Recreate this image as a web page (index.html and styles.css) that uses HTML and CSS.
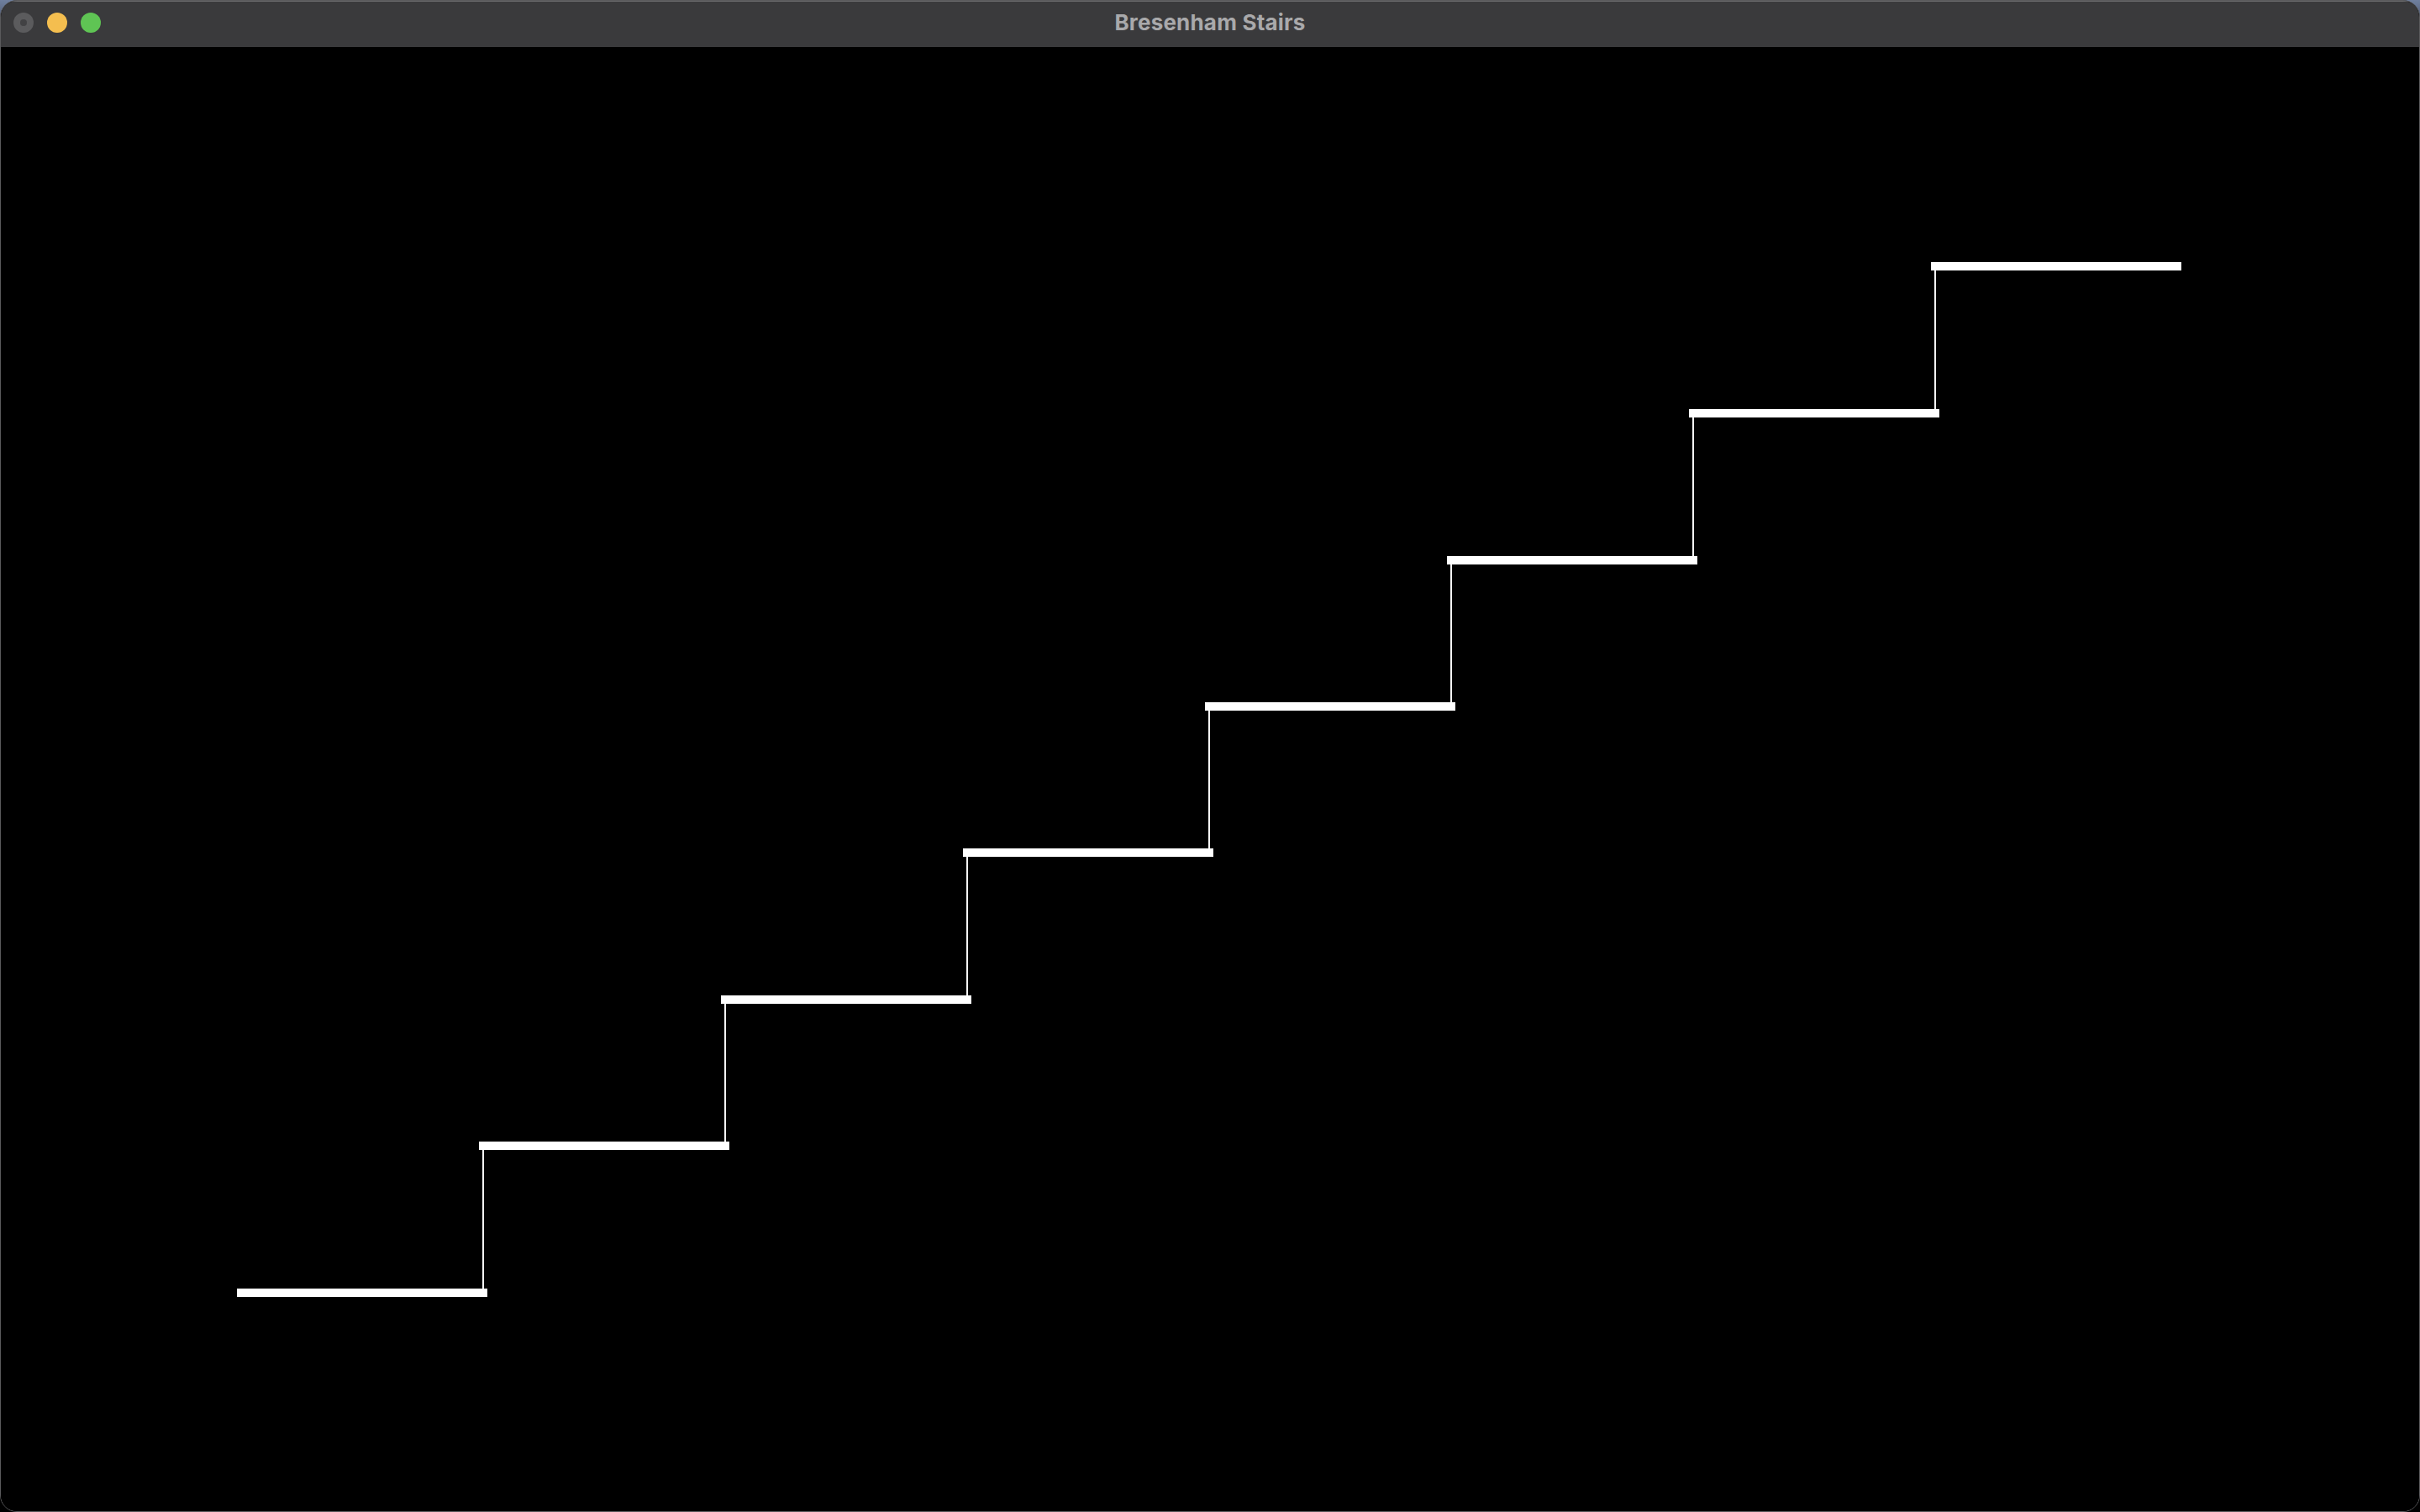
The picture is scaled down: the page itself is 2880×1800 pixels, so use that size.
FILE: index.html
```html
<!DOCTYPE html>
<html>
<head>
<meta charset="utf-8">
<title>Bresenham Stairs</title>
<link rel="stylesheet" href="styles.css">
</head>
<body>
<div class="window">
  <div class="titlebar">
    <div class="lights">
      <span class="light close"><span class="dot"></span></span>
      <span class="light min"></span>
      <span class="light max"></span>
    </div>
    <div class="title">Bresenham Stairs</div>
  </div>
  <div class="content">
    <svg class="canvas" viewBox="1 56 2878 1743" width="2878" height="1743">
      <g fill="#ffffff">
        <rect x="282" y="1534" width="298" height="10"/>
        <rect x="570" y="1359" width="298" height="10"/>
        <rect x="858" y="1185" width="298" height="10"/>
        <rect x="1146" y="1010" width="298" height="10"/>
        <rect x="1434" y="836" width="298" height="10"/>
        <rect x="1722" y="662" width="298" height="10"/>
        <rect x="2010" y="487" width="298" height="10"/>
        <rect x="2298" y="312" width="298" height="10"/>
      </g>
      <g fill="#f4f4f4">
        <rect x="574" y="1369" width="2" height="165"/>
        <rect x="862" y="1195" width="2" height="164"/>
        <rect x="1150" y="1020" width="2" height="165"/>
        <rect x="1438" y="846" width="2" height="164"/>
        <rect x="1726" y="672" width="2" height="164"/>
        <rect x="2014" y="497" width="2" height="165"/>
        <rect x="2302" y="322" width="2" height="165"/>
      </g>
    </svg>
  </div>
</div>
</body>
</html>
```
FILE: styles.css
```css
html, body {
  margin: 0;
  padding: 0;
  width: 2880px;
  height: 1800px;
  overflow: hidden;
  background: linear-gradient(#6f7f9e 0px, #3a4256 40px, #000000 120px);
}

.window {
  box-sizing: border-box;
  width: 2880px;
  height: 1800px;
  border: 1px solid #5a5a5c;
  border-radius: 20px;
  overflow: hidden;
  display: flex;
  flex-direction: column;
  background: #000000;
}

.titlebar {
  height: 55px;
  flex: 0 0 55px;
  background: #3a3a3c;
  position: relative;
  display: flex;
  align-items: center;
  justify-content: center;
  box-shadow: inset 0 1px 0 #6a6a6c;
}

.lights {
  position: absolute;
  left: 15px;
  top: 14px;
  display: flex;
  gap: 16px;
}

.light {
  width: 24px;
  height: 24px;
  border-radius: 50%;
  display: flex;
  align-items: center;
  justify-content: center;
}

.light.close {
  background: #5b5b5d;
}

.light.close .dot {
  width: 8px;
  height: 8px;
  border-radius: 50%;
  background: #424244;
}

.light.min {
  background: #f4be4f;
}

.light.max {
  background: #5fc454;
}

.title {
  font-family: "Inter", "Liberation Sans", sans-serif;
  font-weight: 700;
  font-size: 26px;
  color: #a9a9ab;
  letter-spacing: 0.2px;
  margin-top: -5px;
}

.content {
  flex: 1 1 auto;
  background: #000000;
  overflow: hidden;
}

.canvas {
  display: block;
}
```
